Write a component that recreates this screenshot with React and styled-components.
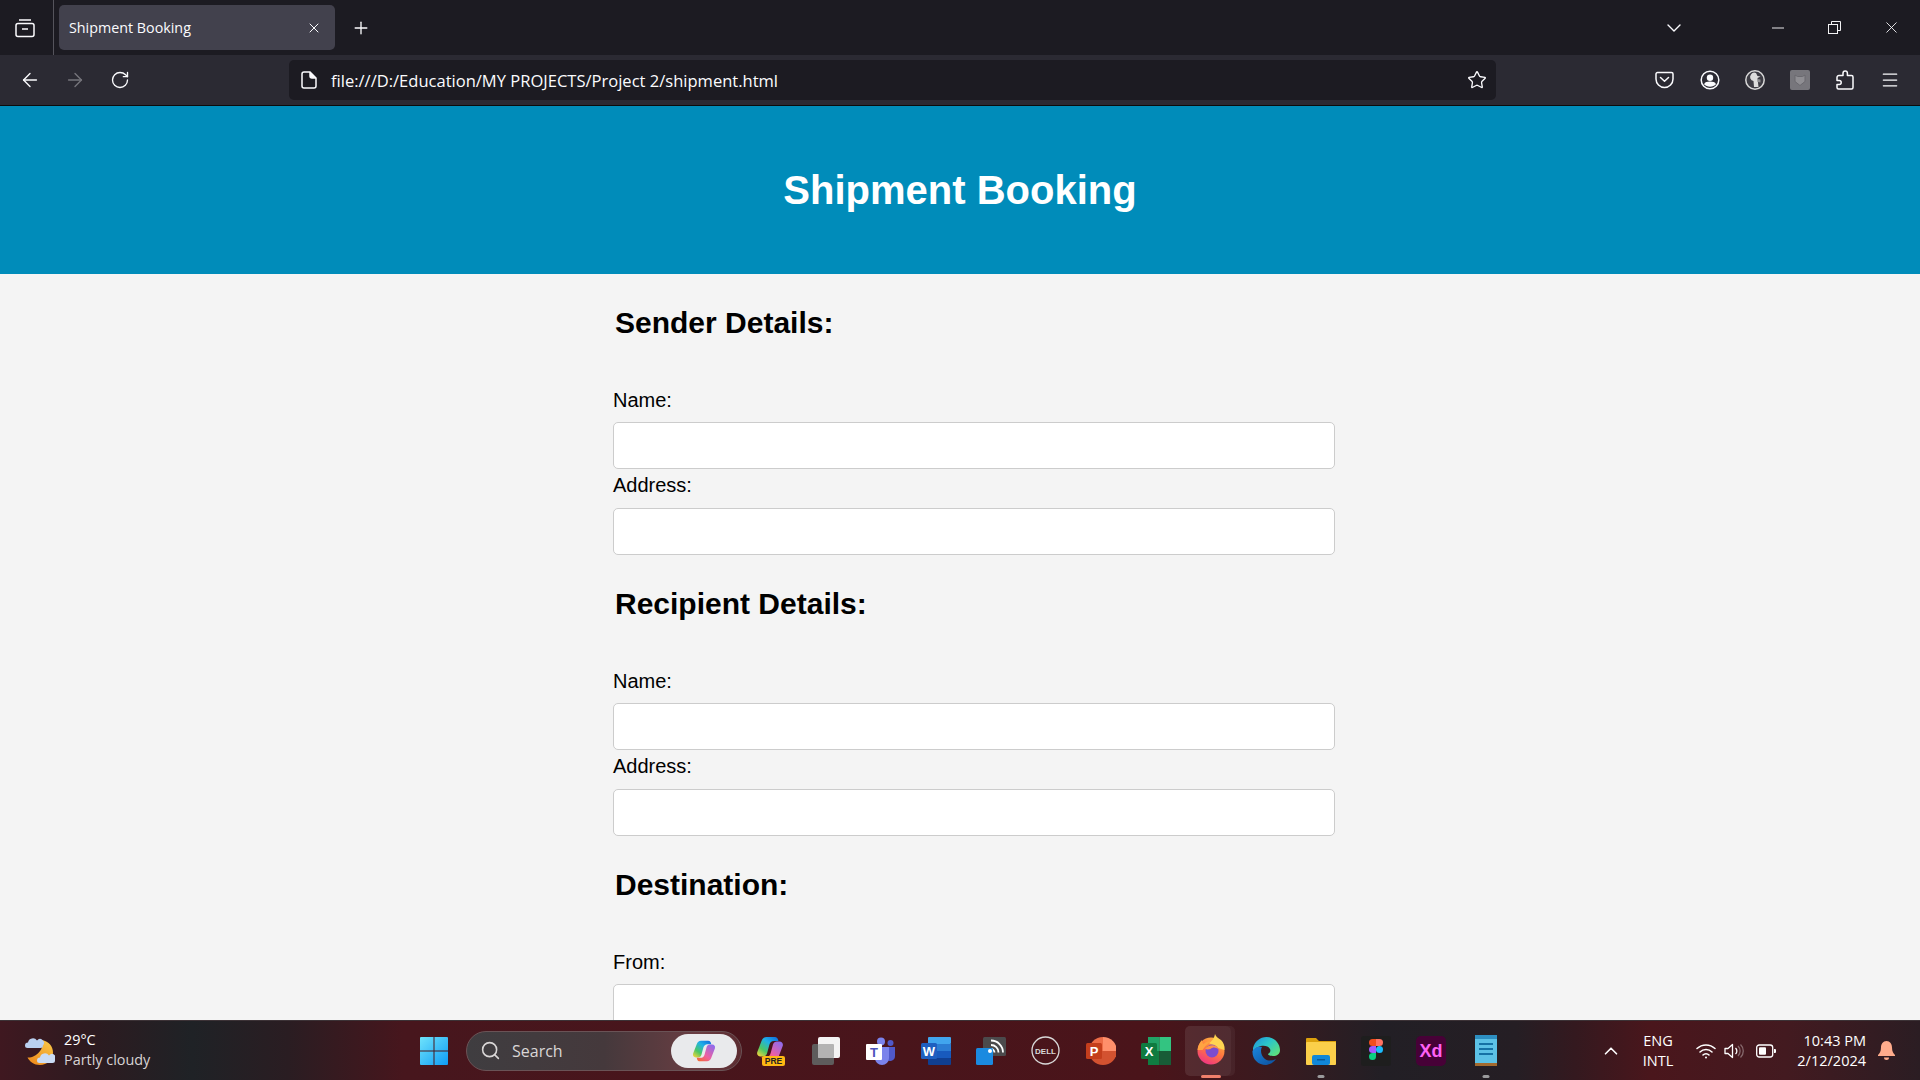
import React from 'react';
import styled, { createGlobalStyle } from 'styled-components';
import { ArrowLeft, ArrowRight, RotateCw, Star, Menu, X, Plus, ChevronDown, ChevronUp, Search } from 'lucide-react';

const GlobalStyle = createGlobalStyle`
  html, body { margin: 0; padding: 0; height: 100%; overflow: hidden; background: #f4f4f4; }
  * { box-sizing: border-box; }
`;

const Screen = styled.div`
  width: 1920px;
  height: 1080px;
  display: flex;
  flex-direction: column;
  overflow: hidden;
  font-family: "Liberation Sans", Arial, sans-serif;
`;

const TabBar = styled.div`
  height: 55px;
  flex: none;
  display: flex;
  align-items: center;
  background: #1c1b22;
  color: #fbfbfe;
`;

const Slot = styled.div`
  width: ${(p) => p.$w || 45}px;
  height: 100%;
  flex: none;
  display: flex;
  align-items: center;
  justify-content: center;
  color: ${(p) => p.$color || '#fbfbfe'};
`;

const TabsButton = styled(Slot)`
  padding-right: 4px;
  border-right: 1px solid #55545c;
`;

const Tab = styled.div`
  width: 276px;
  height: 45px;
  margin-left: 5px;
  padding: 0 13px 0 10px;
  flex: none;
  display: flex;
  align-items: center;
  justify-content: space-between;
  border-radius: 5px;
  background: #42414d;
  font-family: "Open Sans", sans-serif;
  font-size: 14.3px;
`;

const Spacer = styled.div`
  flex: 1;
`;

const Toolbar = styled.div`
  height: 51px;
  flex: none;
  padding: 0 8px 1px 7px;
  display: flex;
  align-items: center;
  background: #2b2a33;
  border-bottom: 1px solid #0c0c0d;
`;

const UrlBar = styled.div`
  width: 1207px;
  height: 40px;
  margin-left: 147px;
  padding: 0 9px 0 12px;
  display: flex;
  align-items: center;
  border-radius: 5px;
  background: #1c1b22;
  color: #fbfbfe;
  font-family: "Open Sans", sans-serif;
  font-size: 16.55px;
`;

const UrlText = styled.span`
  flex: 1;
  margin-left: 14px;
  padding-top: 2px;
`;

const Page = styled.main`
  flex: 1;
  min-height: 0;
  overflow: hidden;
  background: #f4f4f4;
`;

const Banner = styled.header`
  height: 168px;
  display: flex;
  align-items: center;
  justify-content: center;
  background: #008cba;
  color: #fff;
`;

const Title = styled.h1`
  margin: 0;
  font-size: 40px;
  font-weight: 700;
`;

const Form = styled.form`
  width: 722px;
  margin-left: 613px;
  padding-top: 32px;
`;

const Section = styled.section`
  margin-bottom: 32px;
`;

const SectionTitle = styled.h2`
  margin: 0 0 49px 2px;
  font-size: 30px;
  line-height: 34px;
  color: #000;
`;

const Group = styled.div`
  & + & label {
    margin-bottom: 11px;
  }
`;

const Label = styled.label`
  display: block;
  height: 23px;
  margin-bottom: 10px;
  font-size: 20px;
  line-height: 23px;
  color: #000;
`;

const Field = styled.input`
  display: block;
  width: 100%;
  height: 47px;
  margin-bottom: 5px;
  border: 1px solid #ccc;
  border-radius: 5px;
  background: #fff;
`;

const Taskbar = styled.footer`
  height: 60px;
  flex: none;
  display: flex;
  align-items: center;
  border-top: 1px solid #3c3236;
  color: #fff;
  font-family: "Open Sans", sans-serif;
  background: linear-gradient(90deg, #3f1820 0%, #2c1b20 5%, #1f2226 10%, #2a1d22 15%, #47161d 21%, #4a141a 60%, #3a1a1f 66%, #221f25 72%, #251e24 79%, #34191f 82%, #4a161c 86%, #431a20 93%, #2b1d23 100%);
`;

const Weather = styled.div`
  width: 419px;
  flex: none;
  padding-left: 25px;
  display: flex;
  align-items: center;
  gap: 9px;
`;

const WeatherText = styled.div`
  margin-top: -2px;
  font-size: 14.4px;
  line-height: 20px;
`;

const Dim = styled.div`
  color: #d8d3d4;
`;

const StartIcon = styled.div`
  width: 30px;
  height: 30px;
  flex: none;
  display: flex;
`;

const SearchPill = styled.div`
  width: 276px;
  height: 40px;
  margin-left: 17px;
  margin-right: 1px;
  padding: 0 4px 0 13px;
  flex: none;
  display: flex;
  align-items: center;
  gap: 11px;
  border-radius: 20px;
  border: 1px solid #6a5356;
  background: linear-gradient(90deg, #3f3d40 0%, #45393c 50%, #6a3d42 85%, #5b2c31 100%);
  color: #d9d6d6;
  font-size: 16px;
`;

const PillText = styled.span`
  flex: 1;
`;

const CopilotChip = styled.div`
  width: 66px;
  height: 34px;
  display: flex;
  align-items: center;
  justify-content: center;
  border-radius: 17px;
  background: #e9eaec;
`;

const Apps = styled.div`
  display: flex;
`;

const AppSlot = styled.div`
  position: relative;
  width: 55px;
  height: 50px;
  flex: none;
  display: flex;
  align-items: center;
  justify-content: center;
`;

const ActiveBox = styled.div`
  position: absolute;
  left: 2px;
  top: 0;
  width: 46px;
  height: 50px;
  border-radius: 5px;
  background: rgba(255, 255, 255, 0.09);
  box-shadow: 4px 0 0 rgba(255, 255, 255, 0.05);
`;

const RunDot = styled.span`
  position: absolute;
  bottom: -2px;
  left: 50%;
  transform: translateX(-50%);
  width: ${(p) => (p.$active ? 20 : 7)}px;
  height: 3px;
  border-radius: 2px;
  background: ${(p) => (p.$active ? '#f0806c' : '#9a9a9c')};
`;

const Tray = styled.div`
  flex: 1;
  min-width: 0;
  display: flex;
  align-items: center;
`;

const TraySlot = styled.div`
  margin-left: ${(p) => p.$ml || 0}px;
  flex: none;
  display: flex;
  align-items: center;
  justify-content: center;
`;

const Lang = styled.div`
  width: 46px;
  margin-left: 13px;
  text-align: center;
  font-size: 14.5px;
  line-height: 20px;
`;

const Clock = styled.div`
  width: 84px;
  margin-left: 6px;
  text-align: right;
  font-size: 14.5px;
  line-height: 20px;
`;

const ArchiveIcon = () => (
  <svg width="20" height="20" viewBox="0 0 20 20" fill="none" stroke="currentColor" strokeWidth="1.5">
    <rect x="1" y="5.5" width="18" height="13" rx="2" />
    <path d="M4 2h12M7 11h6" />
  </svg>
);

const PageIcon = () => (
  <svg width="16" height="18" viewBox="0 0 16 18" fill="none" stroke="#fbfbfe" strokeWidth="1.5">
    <path d="M3 1h6l6 6v8a2 2 0 0 1-2 2H3a2 2 0 0 1-2-2V3a2 2 0 0 1 2-2z" />
    <path d="M9 1v4a2 2 0 0 0 2 2h4" fill="#fbfbfe" />
  </svg>
);

const Minimize = () => (
  <svg width="12" height="2" viewBox="0 0 12 2"><path d="M0 1h12" stroke="#e8e8ea" strokeWidth="1" /></svg>
);

const Restore = () => (
  <svg width="13" height="13" viewBox="0 0 13 13" fill="none" stroke="#f2f2f4" strokeWidth="1">
    <rect x="0.5" y="3.5" width="9" height="9" />
    <path d="M3.5 3V.5h9v9H10" />
  </svg>
);

const Pocket = () => (
  <svg width="19" height="18" viewBox="0 0 19 18" fill="none" stroke="#fbfbfe" strokeWidth="1.5" strokeLinecap="round" strokeLinejoin="round">
    <path d="M2.500 1.500h14a1.500 1.500 0 0 1 1.500 1.500v5a8.500 8.500 0 0 1-17 0V3a1.500 1.500 0 0 1 1.500-1.500z" />
    <path d="M5.500 6.500l4 3.700 4-3.700" />
  </svg>
);

const Account = () => (
  <svg width="20" height="20" viewBox="0 0 20 20" fill="none">
    <circle cx="10" cy="10" r="8.800" stroke="#fbfbfe" strokeWidth="1.500" />
    <circle cx="10" cy="7.700" r="3.200" fill="#fbfbfe" />
    <path d="M4 14.200c1-2 3-2.600 6-2.600s5 .6 6 2.600c-1.500 1.600-3.500 2.500-6 2.500s-4.500-.9-6-2.500z" fill="#fbfbfe" />
  </svg>
);

const Duck = () => (
  <svg width="20" height="20" viewBox="0 0 20 20">
    <circle cx="10" cy="10" r="9.200" fill="#3d3c44" stroke="#d8d8d8" strokeWidth="1.500" />
    <path d="M6 4.500a4 4 0 0 1 5-1.500l1.500 3 3 .5-3 1.500 1 9h-4.500l-.5-6a4 4 0 0 1-2.500-6.500z" fill="#dcdcdc" />
    <path d="M12.500 9l3 .5v3l-3-.5z" fill="#8d8d90" />
  </svg>
);

const ExtensionTile = () => (
  <svg width="20" height="20" viewBox="0 0 20 20">
    <rect width="20" height="20" rx="2" fill="#77767c" />
    <path d="M5 5l2.500 1.500h5L15 5v6.500L10 15.500 5 11.500z" fill="#8f8e93" stroke="#6a696f" strokeWidth="1" />
  </svg>
);

const PuzzlePiece = () => (
  <svg width="18" height="20" viewBox="0 0 18 20" fill="none" stroke="#fbfbfe" strokeWidth="1.500" strokeLinejoin="round">
    <path d="M7 5.500V3.200a2.200 2.200 0 0 1 4.400 0v2.300h4.100a1.500 1.500 0 0 1 1.500 1.500v10.500a1.500 1.500 0 0 1-1.500 1.500H2.500A1.500 1.500 0 0 1 1 17.500v-3h2.200a2 2 0 0 0 0-4H1V7.500a2 2 0 0 1 2-2z" />
  </svg>
);

const WeatherIcon = () => (
  <svg width="30" height="28" viewBox="0 0 30 28">
    <defs>
      <linearGradient id="moon" x1="0.800" y1="0" x2="0.200" y2="1">
        <stop offset="0" stopColor="#f8c646" />
        <stop offset="1" stopColor="#ee8a1c" />
      </linearGradient>
    </defs>
    <path d="M17 3c7 1.500 11 6.500 11 12.500C28 22.500 22 28 15 28 9 28 4.500 24.500 2.500 20.500 11 21 20 12 17 3z" fill="url(#moon)" />
    <path d="M0 8.500A3 3 0 0 1 3 5.500 5 5 0 0 1 12 3.500 3.500 3.500 0 0 1 18 8.500 2.500 2.500 0 0 1 15.500 11H2.500A2.500 2.500 0 0 1 0 8.500z" fill="#b9d0f0" />
    <path d="M12 23.500a3 3 0 0 1 3-3 5 5 0 0 1 9-2 3.500 3.500 0 0 1 6 5 2.500 2.500 0 0 1-2.500 2.500h-13A2.500 2.500 0 0 1 12 23.500z" fill="#cadcf5" />
  </svg>
);

const WindowsLogo = () => (
  <svg width="30" height="30" viewBox="0 0 30 30">
    <defs>
      <linearGradient id="win" x1="0" y1="0" x2="1" y2="1">
        <stop offset="0" stopColor="#6fe3fb" />
        <stop offset="1" stopColor="#0f9cf5" />
      </linearGradient>
    </defs>
    <path d="M1 2a1 1 0 0 1 1-1h12.500v13.500H1zM15.500 1H28a1 1 0 0 1 1 1v12.500H15.500zM1 15.500h13.500V29H2a1 1 0 0 1-1-1zM15.500 15.500H29V28a1 1 0 0 1-1 1H15.500z" fill="url(#win)" />
  </svg>
);

const RIBBON = 'M10.500 2H19c1.500 0 2.500 1 3 2.500l.5 1.500H18c-2.500 0-4 1.500-4.700 4L11 18.500c-.6 2-2 3-4 3H4.500C2 21.500.5 19.500 1.300 17L5.500 6c1-2.500 2.500-4 5-4z';

const CopilotShape = ({ id }) => (
  <g>
    <defs>
      <linearGradient id={`${id}a`} x1="0.900" y1="0" x2="0.100" y2="1">
        <stop offset="0" stopColor="#0f6fe0" />
        <stop offset="0.350" stopColor="#1fb2e6" />
        <stop offset="0.700" stopColor="#4cc764" />
        <stop offset="1" stopColor="#f0d43c" />
      </linearGradient>
      <linearGradient id={`${id}b`} x1="0.900" y1="0" x2="0.100" y2="1">
        <stop offset="0" stopColor="#f4682e" />
        <stop offset="0.400" stopColor="#ee5fa0" />
        <stop offset="1" stopColor="#8a6cf0" />
      </linearGradient>
    </defs>
    <path d={RIBBON} fill={`url(#${id}a)`} />
    <path d={RIBBON} fill={`url(#${id}b)`} transform="rotate(180 14 14)" />
  </g>
);

const CopilotMark = () => (
  <svg width="24" height="24" viewBox="0 0 28 28">
    <CopilotShape id="chip" />
  </svg>
);

const CopilotPreview = () => (
  <svg width="30" height="32" viewBox="0 0 30 32">
    <CopilotShape id="pre" />
    <rect x="6" y="21" width="23" height="10" rx="2" fill="#fdb813" />
    <text x="17.500" y="29" textAnchor="middle" fontFamily="Liberation Sans, sans-serif" fontSize="8.500" fontWeight="700" fill="#222">PRE</text>
  </svg>
);

const TaskView = () => (
  <svg width="30" height="30" viewBox="0 0 30 30">
    <rect x="1" y="8" width="22" height="21" rx="2" fill="#5e5c5c" />
    <rect x="7" y="1" width="22" height="21" rx="2" fill="#f4f3f3" />
    <rect x="7" y="8" width="16" height="14" rx="1" fill="#b4b3b3" />
  </svg>
);

const Teams = () => (
  <svg width="30" height="28" viewBox="0 0 30 28">
    <circle cx="15" cy="4.500" r="4" fill="#7b83eb" />
    <circle cx="24.500" cy="6" r="3" fill="#5059c9" />
    <path d="M20 10h9v9a5 5 0 0 1-9 3z" fill="#5059c9" />
    <path d="M9 10h14v11a7 7 0 0 1-14 0z" fill="#7b83eb" />
    <rect x="0" y="7" width="16" height="16" rx="1" fill="#fff" />
    <text x="8" y="20" textAnchor="middle" fontFamily="Liberation Sans, sans-serif" fontSize="13" fontWeight="700" fill="#4b53bc">T</text>
  </svg>
);

const Word = () => (
  <svg width="30" height="30" viewBox="0 0 30 30">
    <rect x="7" y="1" width="23" height="7" fill="#41a5ee" rx="1" />
    <rect x="7" y="8" width="23" height="7" fill="#2b7cd3" />
    <rect x="7" y="15" width="23" height="7" fill="#185abd" />
    <rect x="7" y="22" width="23" height="7" fill="#103f91" rx="1" />
    <rect x="0" y="7" width="16" height="16" rx="1.500" fill="#1e5fc0" />
    <text x="8" y="20" textAnchor="middle" fontFamily="Liberation Sans, sans-serif" fontSize="13" fontWeight="700" fill="#fff">W</text>
  </svg>
);

const Cast = () => (
  <svg width="30" height="28" viewBox="0 0 30 28">
    <rect x="7" y="0" width="23" height="19" rx="1.500" fill="#4b4a4c" />
    <path d="M15 3.500a12 12 0 0 1 12 12M15 8a7.500 7.500 0 0 1 7.500 7.500M15 12a3.500 3.500 0 0 1 3.500 3.500" fill="none" stroke="#fff" strokeWidth="1.800" />
    <rect x="0" y="11" width="17" height="17" rx="1.500" fill="#1b8ae0" />
    <circle cx="14" cy="14" r="2" fill="#fff" />
  </svg>
);

const Dell = () => (
  <svg width="29" height="29" viewBox="0 0 29 29">
    <circle cx="14.500" cy="14.500" r="13.500" fill="none" stroke="#d9d9d9" strokeWidth="1.300" />
    <text x="14.500" y="17.500" textAnchor="middle" fontFamily="Liberation Sans, sans-serif" fontSize="8" fontWeight="700" fill="#d9d9d9">DELL</text>
  </svg>
);

const PowerPoint = () => (
  <svg width="30" height="30" viewBox="0 0 30 30">
    <path d="M17 1a14 14 0 0 1 14 14H17z" fill="#ff8f6b" />
    <path d="M17 1a14 14 0 0 0-14 14h14z" fill="#ed6c47" />
    <path d="M3 15a14 14 0 0 0 28 0z" fill="#d35230" />
    <rect x="0" y="7" width="16" height="16" rx="1.500" fill="#c43e1c" />
    <text x="8" y="20" textAnchor="middle" fontFamily="Liberation Sans, sans-serif" fontSize="13" fontWeight="700" fill="#fff">P</text>
  </svg>
);

const Excel = () => (
  <svg width="30" height="30" viewBox="0 0 30 30">
    <rect x="7" y="1" width="11.500" height="14" fill="#21a366" />
    <rect x="18.500" y="1" width="11.500" height="14" fill="#33c481" />
    <rect x="7" y="15" width="11.500" height="14" fill="#107c41" />
    <rect x="18.500" y="15" width="11.500" height="14" fill="#185c37" />
    <rect x="0" y="7" width="16" height="16" rx="1.500" fill="#0f7b40" />
    <text x="8" y="20" textAnchor="middle" fontFamily="Liberation Sans, sans-serif" fontSize="13" fontWeight="700" fill="#fff">X</text>
  </svg>
);

const Firefox = () => (
  <svg width="30" height="36" viewBox="0 0 30 36">
    <defs>
      <linearGradient id="ffx" x1="0.800" y1="0" x2="0.300" y2="1">
        <stop offset="0" stopColor="#ffb52e" />
        <stop offset="0.500" stopColor="#ff6a2c" />
        <stop offset="1" stopColor="#ee1f78" />
      </linearGradient>
    </defs>
    <circle cx="15" cy="18" r="13.500" fill="url(#ffx)" />
    <path d="M19 1c-1 5-3 7-6 9l9 5 6.500 2c.5-4-1-7.500-3.500-10-2.500-2-5-3-6-6z" fill="#ffd040" />
    <path d="M1.500 17C2 12 4 9 6 7c0 2 .5 3 1.500 4 2-2 4-3 7-3-1 2-3 3-5 5l-3 4z" fill="#ff9a30" />
    <circle cx="16" cy="18" r="6.500" fill="#6f3bc9" />
    <path d="M9 16c2-3 7-5 11-3 1 .6 2 1.500 2.500 3-3-2-6-2-8 0-2 .6-4 .6-5.500 0z" fill="#ff8a34" />
  </svg>
);

const Edge = () => (
  <svg width="30" height="30" viewBox="0 0 30 30">
    <defs>
      <linearGradient id="edh" x1="0" y1="0" x2="1" y2="0.800">
        <stop offset="0" stopColor="#1f8fdc" />
        <stop offset="0.500" stopColor="#2cc6c8" />
        <stop offset="1" stopColor="#5fe07a" />
      </linearGradient>
      <linearGradient id="edg" x1="0" y1="0" x2="1" y2="1">
        <stop offset="0" stopColor="#1b86dc" />
        <stop offset="1" stopColor="#0c4f9c" />
      </linearGradient>
    </defs>
    <path d="M2 12C4 5 9 1 15.500 1 23 1 29 7 29 14c0 4-3 6-7 6-3 0-5-1-5-2 2-1 3-3 2-5-2-4-8-4-12-2-2 1-4 2-5 4z" fill="url(#edh)" />
    <path d="M1.500 15c1.500-3 5.500-5 9.500-4-2 3-1 9 3 12 3 2 7 2 11 0-3 4-7 6-10 6C7 29 1 23 1.500 15z" fill="url(#edg)" />
  </svg>
);

const Folder = () => (
  <svg width="30" height="28" viewBox="0 0 30 28">
    <path d="M0 2a1 1 0 0 1 1-1h9l3 3h17v5H0z" fill="#dca10c" />
    <rect x="0" y="5" width="30" height="23" rx="1" fill="#fbcf4a" />
    <rect x="6" y="18" width="18" height="10" rx="2" fill="#1187d9" />
    <rect x="11" y="22" width="8" height="1.500" fill="#0a5a9c" />
  </svg>
);

const Figma = () => (
  <svg width="30" height="30" viewBox="0 0 30 30">
    <rect width="30" height="30" rx="3" fill="#1e1e1e" />
    <path d="M15 3h-3.500a3.500 3.500 0 0 0 0 7H15z" fill="#f24e1e" />
    <path d="M15 3h3.500a3.500 3.500 0 0 1 0 7H15z" fill="#ff7262" />
    <path d="M15 10h-3.500a3.500 3.500 0 0 0 0 7H15z" fill="#a259ff" />
    <circle cx="18.500" cy="13.500" r="3.500" fill="#1abcfe" />
    <path d="M15 17h-3.500a3.500 3.500 0 1 0 3.500 3.500z" fill="#0acf83" />
  </svg>
);

const Xd = () => (
  <svg width="30" height="30" viewBox="0 0 30 30">
    <rect width="30" height="30" rx="5" fill="#470137" />
    <text x="15" y="21" textAnchor="middle" fontFamily="Liberation Sans, sans-serif" fontSize="18" fontWeight="700" fill="#ff61f6">Xd</text>
  </svg>
);

const Notepad = () => (
  <svg width="24" height="32" viewBox="0 0 24 32">
    <rect x="1" y="1" width="22" height="28" fill="#5cc2e6" />
    <rect x="1" y="0" width="22" height="4" fill="#2d8fc1" />
    <rect x="1" y="28" width="22" height="3" fill="#a36a2f" />
    <path d="M5 9h14M5 14h14M5 19h14" stroke="#1572a5" strokeWidth="2" />
  </svg>
);

const Wifi = () => (
  <svg width="20" height="16" viewBox="0 0 20 16" fill="none" stroke="#fff" strokeWidth="1.500" strokeLinecap="round">
    <path d="M1 5.500a13 13 0 0 1 18 0M4 9a8.500 8.500 0 0 1 12 0M7 12a4 4 0 0 1 6 0" />
    <circle cx="10" cy="14.500" r="1" fill="#fff" stroke="none" />
  </svg>
);

const Speaker = () => (
  <svg width="20" height="16" viewBox="0 0 20 16" fill="none" stroke="#fff" strokeWidth="1.300" strokeLinejoin="round">
    <path d="M1 5.500h3L8.500 1.500v13L4 10.500H1z" />
    <path d="M11.500 5a4 4 0 0 1 0 6" />
    <path d="M14 3a7 7 0 0 1 0 10M16.500 1.500a9 9 0 0 1 0 13" opacity="0.350" />
  </svg>
);

const Battery = () => (
  <svg width="20" height="14" viewBox="0 0 20 14" fill="none">
    <rect x="0.700" y="1" width="16" height="12" rx="2.500" stroke="#fff" strokeWidth="1.300" />
    <rect x="3" y="3.300" width="7" height="7.400" rx="1" fill="#fff" />
    <path d="M18 5h1a1 1 0 0 1 1 1v2a1 1 0 0 1-1 1h-1z" fill="#fff" />
  </svg>
);

const Bell = () => (
  <svg width="17" height="20" viewBox="0 0 17 20" fill="#ffac8c">
    <path d="M8.500 0C5 0 3 3 3 6.500c0 4-1.500 6-3 7.500v1h17v-1c-1.500-1.500-3-3.500-3-7.500C14 3 12 0 8.500 0z" />
    <path d="M6 16.500h5a2.500 2.500 0 0 1-5 0z" />
  </svg>
);

const sections = [
  { title: 'Sender Details:', fields: ['Name:', 'Address:'] },
  { title: 'Recipient Details:', fields: ['Name:', 'Address:'] },
  { title: 'Destination:', fields: ['From:'] },
];

const apps = [
  { Icon: CopilotPreview },
  { Icon: TaskView },
  { Icon: Teams },
  { Icon: Word },
  { Icon: Cast },
  { Icon: Dell },
  { Icon: PowerPoint },
  { Icon: Excel },
  { Icon: Firefox, active: true },
  { Icon: Edge },
  { Icon: Folder, running: true },
  { Icon: Figma },
  { Icon: Xd },
  { Icon: Notepad, running: true },
];

export default function App() {
  return (
    <Screen>
      <GlobalStyle />
      <TabBar>
        <TabsButton $w={54}><ArchiveIcon /></TabsButton>
        <Tab>
          Shipment Booking
          <X size={16} strokeWidth={1.5} />
        </Tab>
        <Slot $w={52}><Plus size={20} strokeWidth={1.6} /></Slot>
        <Spacer />
        <Slot $w={48}><ChevronDown size={24} strokeWidth={1.4} /></Slot>
        <Slot $w={51} />
        <Slot $w={57}><Minimize /></Slot>
        <Slot $w={57}><Restore /></Slot>
        <Slot $w={57}><X size={19} strokeWidth={1.1} /></Slot>
      </TabBar>
      <Toolbar>
        <Slot><ArrowLeft size={22} strokeWidth={1.5} /></Slot>
        <Slot $color="#76757c"><ArrowRight size={22} strokeWidth={1.5} /></Slot>
        <Slot><RotateCw size={20} strokeWidth={1.6} /></Slot>
        <UrlBar>
          <PageIcon />
          <UrlText>file:///D:/Education/MY PROJECTS/Project 2/shipment.html</UrlText>
          <Star size={20} strokeWidth={1.6} color="#fbfbfe" />
        </UrlBar>
        <Spacer />
        <Slot><Pocket /></Slot>
        <Slot><Account /></Slot>
        <Slot><Duck /></Slot>
        <Slot><ExtensionTile /></Slot>
        <Slot><PuzzlePiece /></Slot>
        <Slot><Menu size={20} strokeWidth={1.5} /></Slot>
      </Toolbar>
      <Page>
        <Banner>
          <Title>Shipment Booking</Title>
        </Banner>
        <Form>
          {sections.map((section) => (
            <Section key={section.title}>
              <SectionTitle>{section.title}</SectionTitle>
              {section.fields.map((field) => (
                <Group key={field}>
                  <Label>{field}</Label>
                  <Field type="text" />
                </Group>
              ))}
            </Section>
          ))}
        </Form>
      </Page>
      <Taskbar>
        <Weather>
          <WeatherIcon />
          <WeatherText>
            <div>29°C</div>
            <Dim>Partly cloudy</Dim>
          </WeatherText>
        </Weather>
        <StartIcon><WindowsLogo /></StartIcon>
        <SearchPill>
          <Search size={21} strokeWidth={1.8} />
          <PillText>Search</PillText>
          <CopilotChip><CopilotMark /></CopilotChip>
        </SearchPill>
        <Apps>
          {apps.map(({ Icon, active, running }, i) => (
            <AppSlot key={i}>
              {active && <ActiveBox />}
              <Icon />
              {(active || running) && <RunDot $active={active} />}
            </AppSlot>
          ))}
        </Apps>
        <Tray>
          <TraySlot $ml={87}><ChevronUp size={22} strokeWidth={1.8} /></TraySlot>
          <Lang>ENG<br />INTL</Lang>
          <TraySlot $ml={15}><Wifi /></TraySlot>
          <TraySlot $ml={8}><Speaker /></TraySlot>
          <TraySlot $ml={12}><Battery /></TraySlot>
          <Clock>10:43 PM<br />2/12/2024</Clock>
          <TraySlot $ml={12}><Bell /></TraySlot>
        </Tray>
      </Taskbar>
    </Screen>
  );
}
